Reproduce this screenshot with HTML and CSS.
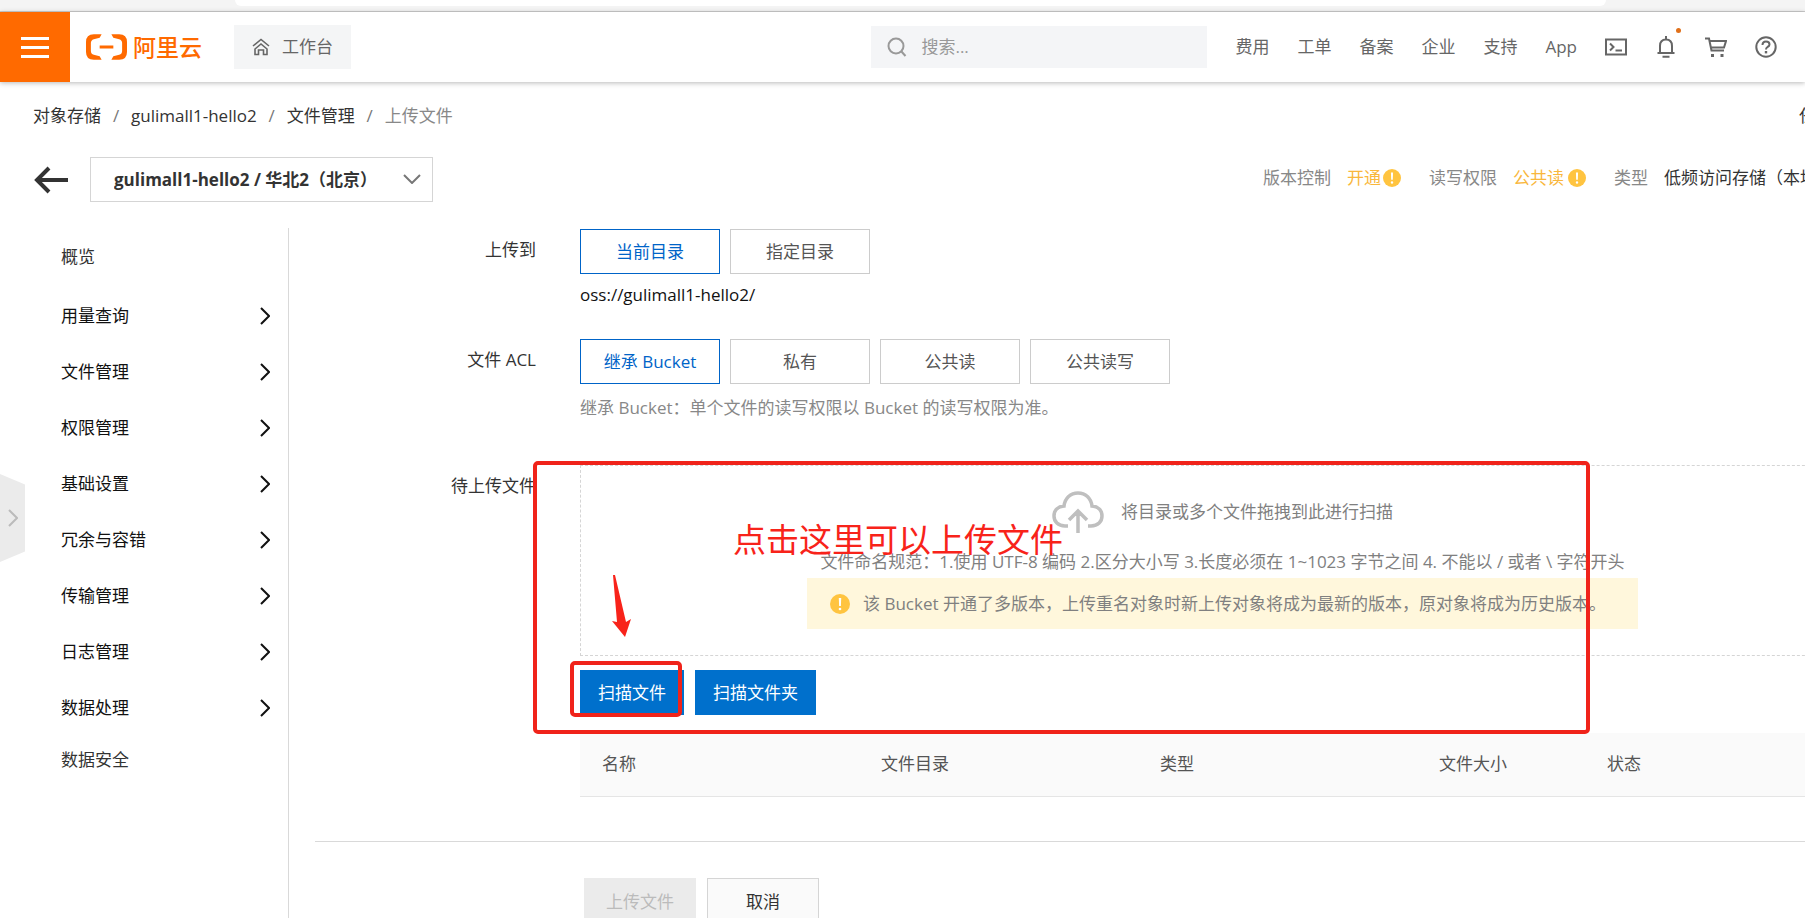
FILE: index.html
```html
<!DOCTYPE html>
<html lang="zh-CN">
<head>
<meta charset="utf-8">
<title>上传文件 - 对象存储</title>
<link rel="stylesheet" href="styles.css">
</head>
<body>
<svg class="defs" aria-hidden="true">
  <symbol id="chevron" viewBox="0 0 10 18"><path d="M1 1l8 8-8 8" fill="none" stroke="currentColor" stroke-width="2"/></symbol>
  <symbol id="warn" viewBox="0 0 20 20"><circle cx="10" cy="10" r="10" fill="#ffc440"/><path d="M8.800 4h2.400l-.3 8H9.100z" fill="#fff"/><circle cx="10" cy="15" r="1.300" fill="#fff"/></symbol>
</svg>

<div class="browser-strip"><div class="address-bar"></div></div>

<header class="topbar">
  <button class="menu-btn" type="button" aria-label="菜单"><span></span><span></span><span></span></button>
  <a class="logo" href="#">
    <svg width="41" height="26" viewBox="0 0 42 26" fill="#ff6a00" aria-hidden="true"><path d="M16 0H8Q0 0 0 8v10q0 8 8 8h8l-2-3.500-6-1.500Q5 20 5 17V9q0-3 3-4l6-1.500zM26 0h8q8 0 8 8v10q0 8-8 8h-8l2-3.500 6-1.500q3-1 3-4V9q0-3-3-4l-6-1.500zM14 11.500h14v3H14z"/></svg>
    <span>阿里云</span>
  </a>
  <a class="workbench" href="#">
    <svg width="18" height="18" viewBox="0 0 18 18" fill="none" stroke="#666" stroke-width="1.600" aria-hidden="true"><path d="M1 8l8-6.500L17 8M3 11l6-5 6 5v5.500h-3.500V12h-5v4.500H3z"/></svg>
    工作台
  </a>
  <label class="search">
    <svg width="20" height="20" viewBox="0 0 20 20" fill="none" stroke="#999" stroke-width="2" aria-hidden="true"><circle cx="9" cy="9" r="7.500"/><path d="M14 14l4.500 5"/></svg>
    <input type="text" placeholder="搜索..." aria-label="搜索">
  </label>
  <nav class="topnav">
    <a href="#">费用</a><a href="#">工单</a><a href="#">备案</a><a href="#">企业</a><a href="#">支持</a><a href="#">App</a>
  </nav>
  <div class="tools">
    <button type="button" aria-label="Cloud Shell"><svg width="22" height="22" viewBox="0 0 22 22" fill="none" stroke="#666" stroke-width="2"><path d="M1 3.500h20v15H1zM5 7.500l3.500 3.500L5 14.500M10.500 14.500H17"/></svg></button>
    <button type="button" aria-label="消息"><svg width="22" height="22" viewBox="0 0 22 22" fill="none" stroke="#666" stroke-width="2"><path d="M5 16.500V10q0-6.500 6-6.500T17 10v6.500M2.500 17h17M11 3.500V0M7.500 20.800h7"/></svg><i class="dot"></i></button>
    <button type="button" aria-label="购物车"><svg width="22" height="22" viewBox="0 0 22 22" fill="none" stroke="#666" stroke-width="2"><path d="M0 2.500h4l2.500 12h12.500M4.500 5H21l-2 6.500H6"/><path d="M6 18h3v3H6zM15.500 18h3v3h-3z" fill="#666" stroke="none"/></svg></button>
    <button type="button" aria-label="帮助"><svg width="22" height="22" viewBox="0 0 22 22" fill="none" stroke="#666" stroke-width="2"><circle cx="11" cy="11" r="9.700"/><path d="M7.500 9q0-3.500 3.500-3.500T14.500 8.500q0 1.500-2 2.500Q11 12 11 13.500"/><path d="M9.800 15h2.400v2.400H9.800z" fill="#666" stroke="none"/></svg></button>
  </div>
</header>

<div class="crumb-row">
  <nav class="crumbs"><a href="#">对象存储</a><i>/</i><a href="#">gulimall1-hello2</a><i>/</i><a href="#">文件管理</a><i>/</i><span>上传文件</span></nav>
  <a class="tasks" href="#">任务列表</a>
</div>

<div class="title-row">
  <button class="back" type="button" aria-label="返回"><svg width="34" height="28" viewBox="0 0 34 28" fill="none" stroke="#333" stroke-width="4"><path d="M15 2L3 14l12 12M3 14h31"/></svg></button>
  <div class="bucket">
    <select aria-label="Bucket"><option>gulimall1-hello2 / 华北2（北京）</option></select>
    <svg width="18" height="10" viewBox="0 0 18 10" fill="none" stroke="#777" stroke-width="2" aria-hidden="true"><path d="M1 1l8 8 8-8"/></svg>
  </div>
  <dl class="status">
    <div><dt>版本控制</dt><dd class="amber">开通<svg width="18" height="18"><use href="#warn"/></svg></dd></div>
    <div><dt>读写权限</dt><dd class="amber spaced">公共读<svg width="18" height="18"><use href="#warn"/></svg></dd></div>
    <div><dt>类型</dt><dd>低频访问存储（本地冗余）</dd></div>
  </dl>
</div>

<div class="body">
  <aside class="sidebar">
    <a class="plain" href="#">概览</a>
    <a href="#">用量查询<svg width="10" height="18"><use href="#chevron"/></svg></a>
    <a href="#">文件管理<svg width="10" height="18"><use href="#chevron"/></svg></a>
    <a href="#">权限管理<svg width="10" height="18"><use href="#chevron"/></svg></a>
    <a href="#">基础设置<svg width="10" height="18"><use href="#chevron"/></svg></a>
    <a href="#">冗余与容错<svg width="10" height="18"><use href="#chevron"/></svg></a>
    <a href="#">传输管理<svg width="10" height="18"><use href="#chevron"/></svg></a>
    <a href="#">日志管理<svg width="10" height="18"><use href="#chevron"/></svg></a>
    <a href="#">数据处理<svg width="10" height="18"><use href="#chevron"/></svg></a>
    <a class="plain" href="#">数据安全</a>
  </aside>

  <main class="main">
    <section class="row">
      <span class="label" id="l-dir">上传到</span>
      <div class="field">
        <div class="options" role="group" aria-labelledby="l-dir">
          <button class="option on" type="button">当前目录</button>
          <button class="option" type="button">指定目录</button>
        </div>
        <p class="path">oss://gulimall1-hello2/</p>
      </div>
    </section>
    <section class="row">
      <span class="label" id="l-acl">文件 ACL</span>
      <div class="field">
        <div class="options" role="group" aria-labelledby="l-acl">
          <button class="option on" type="button">继承 Bucket</button>
          <button class="option" type="button">私有</button>
          <button class="option" type="button">公共读</button>
          <button class="option" type="button">公共读写</button>
        </div>
        <p class="hint">继承 Bucket：单个文件的读写权限以 Bucket 的读写权限为准。</p>
      </div>
    </section>
    <section class="row files">
      <span class="label">待上传文件</span>
      <div class="field">
        <div class="dropzone">
          <div class="drop-title">
            <svg width="52" height="42" viewBox="0 0 52 42" fill="none" stroke="#bfbfbf" stroke-width="3.500" aria-hidden="true"><path d="M16 35h-3C6 35 2 30.500 2 25c0-6 4-9.500 10-10C13 7 18.500 2 26 2s13 5 14 13c6 .5 10 4 10 10 0 5.500-4 10-11 10h-3M26 42V21M17 29l9-9 9 9"/></svg>
            将目录或多个文件拖拽到此进行扫描
          </div>
          <p class="drop-rule">文件命名规范：1.使用 UTF-8 编码 2.区分大小写 3.长度必须在 1~1023 字节之间 4. 不能以 / 或者 \ 字符开头</p>
          <div class="notice"><svg width="20" height="20"><use href="#warn"/></svg>该 Bucket 开通了多版本，上传重名对象时新上传对象将成为最新的版本，原对象将成为历史版本。</div>
        </div>
        <div class="scan">
          <button class="primary" type="button">扫描文件</button>
          <button class="primary" type="button">扫描文件夹</button>
        </div>
        <table class="list">
          <colgroup><col class="c-name"><col class="c-name"><col class="c-name"><col class="c-size"><col></colgroup>
          <thead><tr><th>名称</th><th>文件目录</th><th>类型</th><th>文件大小</th><th>状态</th></tr></thead>
        </table>
        <div class="mark mark-area"></div>
        <div class="mark mark-button"></div>
        <div class="mark-text">点击这里可以上传文件</div>
        <svg class="mark-arrow" width="20" height="62" viewBox="0 0 20 62" aria-hidden="true"><path d="M1 0h2L14 47l5-3-6 18L0 46l5 1z" fill="#f8231a"/></svg>
      </div>
    </section>
    <div class="footer">
      <button class="submit" type="button" disabled>上传文件</button>
      <button class="cancel" type="button">取消</button>
    </div>
  </main>
</div>

<button class="drawer" type="button" aria-label="展开"><svg width="10" height="18"><use href="#chevron"/></svg></button>
</body>
</html>
```
FILE: styles.css
```css
* { box-sizing: border-box; }

body {
  margin: 0;
  height: 100vh;
  overflow: hidden;
  display: flex;
  flex-direction: column;
  position: relative;
  background: #fff;
  color: #333;
  font: 400 17px/24px "Open Sans", "Noto Sans CJK SC", sans-serif;
}

a { color: inherit; text-decoration: none; }
button, input, select { font: inherit; color: inherit; }
button { padding: 0; border: 0; background: none; }
p, dl, dd { margin: 0; }
svg { display: block; flex: none; }
.defs { position: absolute; width: 0; height: 0; }

.browser-strip {
  flex: none;
  height: 12px;
  padding: 0 11% 0 13%;
  background: #f4f4f4;
  border-bottom: 1px solid #ccc;
}
.address-bar { height: 6px; background: #fff; border-radius: 0 0 6px 6px; }

/* Top bar */
.topbar {
  flex: none;
  display: flex;
  align-items: center;
  height: 70px;
  padding-right: 28px;
  color: #666;
  box-shadow: 0 1px 5px rgba(0, 0, 0, .28);
}
.menu-btn {
  width: 70px;
  height: 70px;
  display: flex;
  flex-direction: column;
  align-items: center;
  justify-content: center;
  gap: 6px;
  background: #ff6a00;
}
.menu-btn span { width: 28px; height: 3px; background: #fff; }
.logo {
  display: flex;
  align-items: center;
  gap: 6px;
  margin-left: 16px;
  color: #ff6a00;
  font-size: 23px;
  font-weight: 500;
}
.workbench {
  display: flex;
  align-items: center;
  gap: 12px;
  height: 44px;
  margin-left: 32px;
  padding: 0 18px;
  background: #f4f5f6;
}
.search {
  display: flex;
  align-items: center;
  gap: 14px;
  width: 336px;
  height: 42px;
  margin-left: auto;
  padding: 0 16px;
  background: #f4f5f7;
}
.search input { flex: 1; min-width: 0; padding: 0; border: 0; outline: 0; background: none; }
.search input::placeholder { color: #999; opacity: 1; }
.topnav { display: flex; gap: 28px; margin-left: 28px; }
.tools { display: flex; gap: 28px; margin-left: 28px; }
.tools button { position: relative; }
.dot {
  position: absolute;
  top: -8px;
  right: -4px;
  width: 5px;
  height: 5px;
  border-radius: 50%;
  background: #e0701a;
}

/* Breadcrumb and bucket title */
.crumb-row { flex: none; display: flex; margin-top: 22px; padding-left: 33px; }
.crumbs { display: flex; }
.crumbs i { width: 30px; text-align: center; font-style: normal; color: #777; }
.crumbs span { color: #888; }
.tasks { margin-left: auto; margin-right: -62px; white-space: nowrap; }

.title-row {
  flex: none;
  display: flex;
  align-items: center;
  margin-top: 29px;
  padding-left: 34px;
}
.bucket { position: relative; width: 343px; margin-left: 22px; }
.bucket select {
  display: block;
  appearance: none;
  width: 100%;
  height: 45px;
  padding: 0 44px 0 23px;
  border: 1px solid #d5d5d5;
  border-radius: 0;
  background: #fff;
  font-weight: 700;
}
.bucket svg { position: absolute; right: 12px; top: 17px; pointer-events: none; }
.status {
  display: flex;
  gap: 28px;
  margin-left: auto;
  margin-right: -63px;
  padding-bottom: 4px;
  white-space: nowrap;
}
.status div { display: flex; gap: 16px; }
.status dt { color: #888; }
.status dd { display: flex; align-items: center; gap: 2px; }
.status .amber { color: #f9b73c; }
.status .spaced { gap: 4px; }

/* Body columns */
.body { flex: 1; min-height: 0; display: flex; margin-top: 26px; }
.sidebar {
  flex: none;
  display: flex;
  flex-direction: column;
  width: 289px;
  padding: 5px 18px 0 61px;
  border-right: 1px solid #d9d9d9;
  color: #111;
}
.sidebar a {
  display: flex;
  align-items: center;
  justify-content: space-between;
  height: 56px;
}
.sidebar .plain { height: 48px; color: #333; }
.sidebar .plain:first-child { margin-bottom: 7px; }

.main { flex: 1; min-width: 0; margin-right: -60px; }
.row { display: flex; gap: 44px; height: 110px; }
.label { flex: none; width: 247px; padding-top: 10px; text-align: right; }
.field { flex: 1; min-width: 0; position: relative; padding-top: 1px; }
.options { display: flex; gap: 10px; }
.option {
  width: 140px;
  height: 45px;
  border: 1px solid #ccc;
  background: #fff;
  color: #555;
}
.option.on { border-color: #0064c8; color: #0064c8; }
.path { margin-top: 9px; color: #111; }
.hint { margin-top: 12px; color: #888; }

.files { height: auto; margin-top: 16px; }
.dropzone {
  display: flex;
  flex-direction: column;
  align-items: center;
  height: 191px;
  padding-top: 24px;
  border: 1px dashed #d5d5d5;
  color: #808080;
  white-space: nowrap;
}
.drop-title { display: flex; align-items: center; gap: 17px; height: 44px; line-height: 28px; }
.drop-rule { margin-top: 16px; }
.notice {
  display: flex;
  align-items: center;
  gap: 13px;
  width: 831px;
  height: 51px;
  margin-top: 4px;
  padding-left: 23px;
  background: #fff7dc;
}
.scan { display: flex; gap: 11px; margin-top: 14px; }
.primary { height: 45px; padding: 0 18px; background: #0070cc; color: #fff; }

.list { width: 100%; margin-top: 18px; border-collapse: collapse; table-layout: fixed; }
.c-name { width: 279px; }
.c-size { width: 168px; }
.list th {
  height: 63px;
  padding: 0 0 0 22px;
  background: #fafafa;
  border-bottom: 1px solid #e5e5e5;
  color: #555;
  font-weight: 400;
  text-align: left;
}

.footer {
  display: flex;
  gap: 11px;
  margin: 44px 0 0 26px;
  padding: 36px 0 0 269px;
  border-top: 1px solid #d9d9d9;
}
.footer button { width: 112px; height: 48px; }
.submit { background: #ebebeb; color: #bbb; }
.cancel { border: 1px solid #d5d5d5; background: #fafafa; }

/* Annotations drawn over the upload area */
.mark { position: absolute; border: 4px solid #f0231a; border-radius: 5px; pointer-events: none; }
.mark-area { top: -3px; left: -47px; width: 1057px; height: 273px; }
.mark-button { top: 197px; left: -10px; width: 112px; height: 56px; }
.mark-text {
  position: absolute;
  top: 52px;
  left: 153px;
  color: #f8231a;
  font-size: 33px;
  line-height: 48px;
  white-space: nowrap;
}
.mark-arrow { position: absolute; top: 111px; left: 32px; }

/* Collapsed drawer handle */
.drawer {
  position: absolute;
  left: 0;
  top: 474px;
  width: 25px;
  height: 88px;
  padding-left: 8px;
  background: #ebebeb;
  color: #bbb;
  clip-path: polygon(0 0, 100% 12%, 100% 88%, 0 100%);
}
```
